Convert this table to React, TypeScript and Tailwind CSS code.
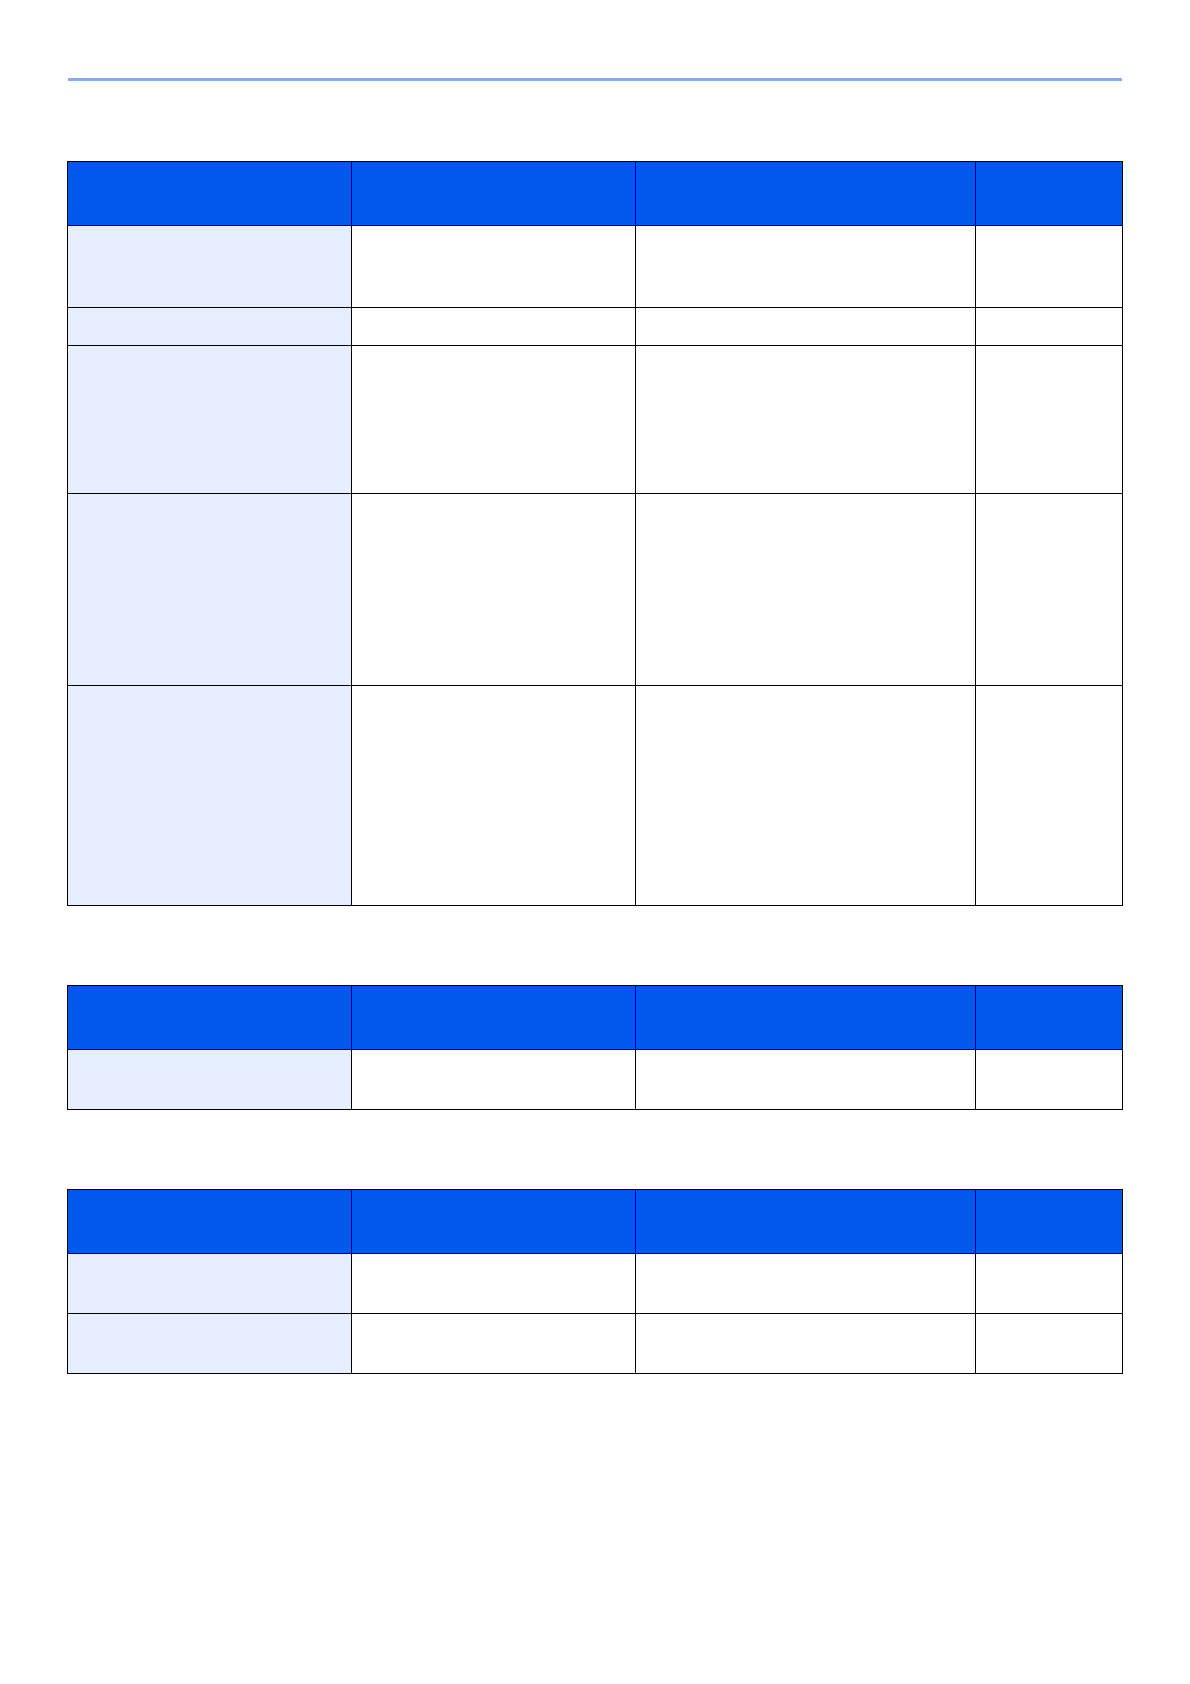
const cols = ['w-[284px]', 'w-[284px]', 'w-[340px]', 'w-[147px]'];

function Table({ rows }: { rows: string[] }) {
  return (
    <div className="ml-[67px] w-[1056px] border-r border-b border-black">
      {/* header */}
      <div className="flex">
        {cols.map((w, i) => (
          <div key={i} className={`${w} h-[64px] border-l border-t border-black bg-[#0058ec]`} />
        ))}
      </div>
      {rows.map((h, r) => (
        <div key={r} className="flex">
          {cols.map((w, i) => (
            <div
              key={i}
              className={`${w} ${h} border-l border-t border-black ${i === 0 ? 'bg-[#e6edfc]' : 'bg-white'}`}
            />
          ))}
        </div>
      ))}
    </div>
  );
}

export default function App() {
  return (
    <div className="min-h-[1684px] w-[1190px] bg-white pt-[78px]" style={{ fontFamily: '"Liberation Sans", Arial, sans-serif' }}>
      <div className="ml-[68px] h-[3px] w-[1054px] bg-[#80adf6]" />
      <div className="mt-[80px]">
        <Table rows={['h-[82px]', 'h-[38px]', 'h-[148px]', 'h-[192px]', 'h-[220px]']} />
      </div>
      <div className="mt-[79px]">
        <Table rows={['h-[60px]']} />
      </div>
      <div className="mt-[79px]">
        <Table rows={['h-[60px]', 'h-[60px]']} />
      </div>
    </div>
  );
}
